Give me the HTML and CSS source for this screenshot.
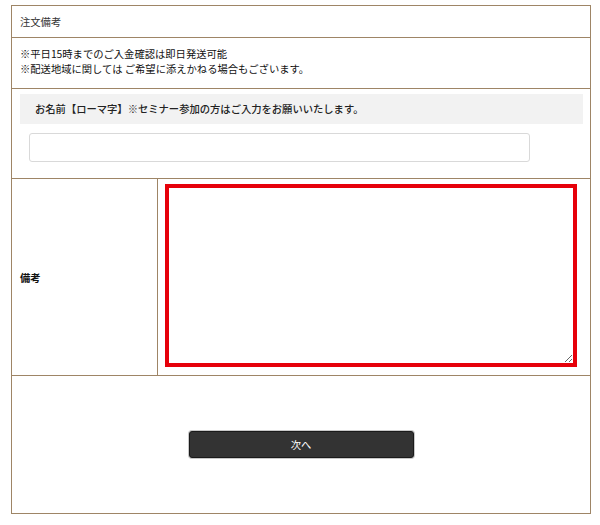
FILE: index.html
```html
<!DOCTYPE html>
<html lang="ja">
<head>
    <meta charset="UTF-8">
    <meta name="viewport" content="width=device-width, initial-scale=1.0">
    <title>注文備考</title>
    <link rel="stylesheet" href="styles.css">
</head>
<body>
    <div class="orderBox">
        <div class="orderHead">注文備考</div>

        <div class="orderNote">
            <p>※平日15時までのご入金確認は即日発送可能</p>
            <p>※配送地域に関しては ご希望に添えかねる場合もございます。</p>
        </div>

        <div class="orderName">
            <div class="nameLabel">お名前【ローマ字】※セミナー参加の方はご入力をお願いいたします。</div>
            <input type="text" class="nameInput">
        </div>

        <div class="orderMemo">
            <div class="memoLabel">備考</div>
            <div class="memoField">
                <textarea class="memoText"></textarea>
            </div>
        </div>

        <div class="orderSubmit">
            <button type="button" class="nextBtn">次へ</button>
        </div>
    </div>
</body>
</html>
```

FILE: styles.css
```css
* {
    box-sizing: border-box;
}
body {
    margin: 0;
    padding: 5px 10px 0 11px;
    background-color: #fff;
    font-family: "Noto Sans CJK JP", "Noto Sans", sans-serif;
    font-size: 10.3px;
    color: #222;
}
p {
    margin: 0;
}
.orderBox {
    width: 580px;
    border: 1px solid #9e8566;
}
.orderHead {
    height: 31px;
    padding: 0 8px;
    line-height: 31px;
    color: #333;
}
.orderNote {
    height: 51px;
    padding: 8px 8px 0;
    border-top: 1px solid #9e8566;
    line-height: 15px;
    color: #111;
}
.orderName {
    height: 90px;
    padding-top: 5px;
    border-top: 1px solid #9e8566;
}
.nameLabel {
    height: 30px;
    margin: 0 7px 0 8px;
    padding-left: 15px;
    line-height: 30px;
    background-color: #f2f2f2;
    color: #222;
    font-weight: 500;
}
.nameInput {
    display: block;
    width: 501px;
    height: 29px;
    margin: 9px 0 0 17px;
    border: 1px solid #d9d9d9;
    border-radius: 3px;
    background-color: #fff;
}
.orderMemo {
    display: flex;
    height: 197px;
    border-top: 1px solid #9e8566;
}
.memoLabel {
    display: flex;
    align-items: center;
    width: 145px;
    padding-left: 8px;
    font-weight: bold;
    color: #111;
}
.memoField {
    flex: 1;
    padding: 5px 0 0 7px;
    border-left: 1px solid #9e8566;
}
.memoText {
    display: block;
    width: 412px;
    height: 183px;
    margin: 0;
    border: 4px solid #e6000a;
    background-color: #fff;
    resize: both;
}
.orderSubmit {
    display: flex;
    align-items: center;
    justify-content: center;
    height: 138px;
    border-top: 1px solid #9e8566;
}
.nextBtn {
    width: 225px;
    height: 27px;
    border: 1px solid #1a1a1a;
    border-radius: 3px;
    background-color: #333;
    box-shadow: 0 0 0 1px #c8c8c8;
    color: #fff;
    font-family: "Noto Sans CJK JP", "Noto Sans", sans-serif;
    font-size: 10.3px;
    cursor: pointer;
}
```
